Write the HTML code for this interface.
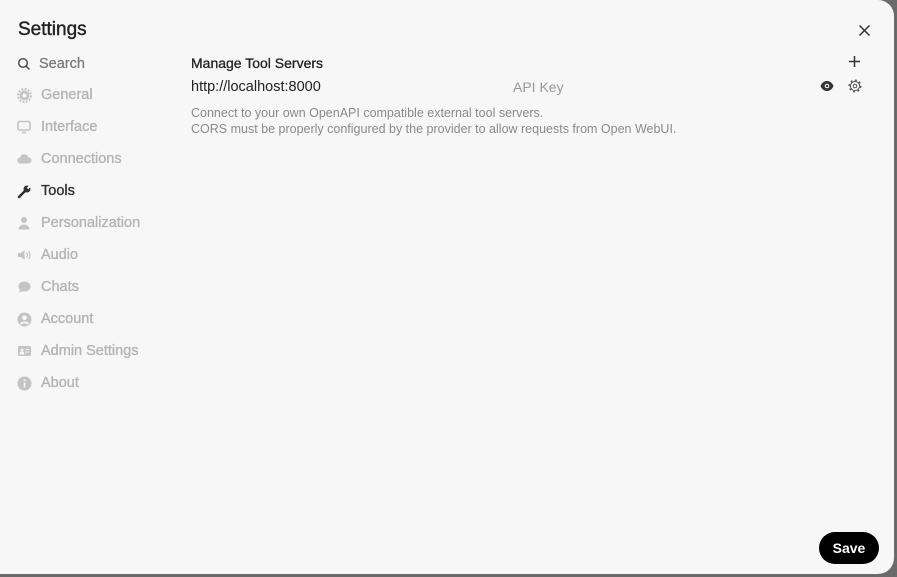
<!DOCTYPE html>
<html><head><style>
html,body{margin:0;padding:0;width:897px;height:577px;overflow:hidden;background:#6b6b6b;font-family:"Liberation Sans",sans-serif;}
.panel{position:absolute;left:0;top:0;width:894px;height:574px;background:#f7f7f7;border-radius:0 16px 16px 0;}
.t{position:absolute;white-space:nowrap;}
.nav{position:absolute;left:17px;font-size:14.5px;color:#b4b4b4;-webkit-text-stroke:0.35px #b4b4b4;}
.nav svg{position:absolute;left:0;top:1px;}
.nav span{position:absolute;left:24px;top:0;white-space:nowrap;}
</style></head><body>
<div class="panel">
<div class="t" style="left:18px;top:19px;font-size:19px;color:#222;-webkit-text-stroke:0.4px #222">Settings</div>
<svg style="position:absolute;left:858px;top:24px" width="13" height="13" viewBox="0 0 13 13"><path d="M1.5 1.5L11.5 11.5M11.5 1.5L1.5 11.5" stroke="#333" stroke-width="1.5"/></svg>

<div class="nav" style="top:56px;-webkit-text-stroke:0.2px #777"><svg width="14" height="14" viewBox="0 0 14 14"><circle cx="6" cy="6" r="4.3" fill="none" stroke="#444" stroke-width="1.4"/><path d="M9.2 9.2L12.5 12.5" stroke="#444" stroke-width="1.4"/></svg><span style="left:22px;color:#777">Search</span></div>
<div class="nav" style="top:87px"><svg width="15" height="15" viewBox="0 0 15 15"><circle cx="7.5" cy="7.5" r="5" fill="#c4c4c4"/><circle cx="7.5" cy="7.5" r="6.5" fill="none" stroke="#c4c4c4" stroke-width="2" stroke-dasharray="2 1.4"/><circle cx="7.5" cy="7.5" r="2" fill="#f7f7f7"/></svg><span>General</span></div>
<div class="nav" style="top:119px"><svg width="14" height="14" viewBox="0 0 14 14"><rect x="1" y="1.5" width="12" height="8.5" rx="1.5" fill="none" stroke="#c4c4c4" stroke-width="1.6"/><path d="M5 12.5h4" stroke="#c4c4c4" stroke-width="1.6"/></svg><span>Interface</span></div>
<div class="nav" style="top:151px"><svg width="15" height="14" viewBox="0 0 15 14"><path d="M3.5 11.5a3 3 0 0 1-.3-6 4.2 4.2 0 0 1 8.1-.2 3.1 3.1 0 0 1 .2 6.2z" fill="#c4c4c4"/></svg><span>Connections</span></div>
<div class="nav" style="top:183px;color:#333;-webkit-text-stroke:0.35px #333"><svg width="15" height="15" viewBox="0 0 15 15"><path d="M2 13L8 7" stroke="#333" stroke-width="2.6" stroke-linecap="round"/><circle cx="10" cy="5" r="3.5" fill="#333"/><path d="M10.5 4.5L13 2" stroke="#f7f7f7" stroke-width="2"/></svg><span>Tools</span></div>
<div class="nav" style="top:215px"><svg width="14" height="14" viewBox="0 0 14 14"><circle cx="7" cy="4" r="3" fill="#c4c4c4"/><path d="M1.5 13.5a5.5 5 0 0 1 11 0z" fill="#c4c4c4"/></svg><span>Personalization</span></div>
<div class="nav" style="top:247px"><svg width="15" height="14" viewBox="0 0 15 14"><path d="M1 5h3l3.5-3v10L4 9H1z" fill="#c4c4c4"/><path d="M9.5 4.5a3.5 3.5 0 0 1 0 5M11.5 3a6 6 0 0 1 0 8" stroke="#c4c4c4" stroke-width="1.2" fill="none"/></svg><span>Audio</span></div>
<div class="nav" style="top:279px"><svg width="15" height="14" viewBox="0 0 15 14"><path d="M7.5 1.5c3.6 0 6 2.2 6 5s-2.4 5-6 5c-.8 0-1.5-.1-2.2-.3L2 12.5l1-2.6C2 9 1.5 7.8 1.5 6.5c0-2.8 2.4-5 6-5z" fill="#c4c4c4"/></svg><span>Chats</span></div>
<div class="nav" style="top:311px"><svg width="15" height="15" viewBox="0 0 15 15"><circle cx="7.5" cy="7.5" r="7" fill="#c4c4c4"/><circle cx="7.5" cy="5.8" r="2.3" fill="#f7f7f7"/><path d="M3.5 12a5 4 0 0 1 8 0" stroke="#f7f7f7" stroke-width="1.8" fill="none"/></svg><span>Account</span></div>
<div class="nav" style="top:343px"><svg width="15" height="14" viewBox="0 0 15 14"><rect x="1" y="2" width="13" height="10" rx="1.5" fill="#c4c4c4"/><circle cx="5" cy="6" r="1.5" fill="#f7f7f7"/><path d="M3 10a2 2 0 0 1 4 0z M8.5 5.5h3.5M8.5 8h3.5" stroke="#f7f7f7" stroke-width="1" fill="#f7f7f7"/></svg><span>Admin Settings</span></div>
<div class="nav" style="top:375px"><svg width="15" height="15" viewBox="0 0 15 15"><circle cx="7.5" cy="7.5" r="7" fill="#c4c4c4"/><rect x="6.7" y="6.5" width="1.6" height="5" fill="#f7f7f7"/><circle cx="7.5" cy="4.3" r="1" fill="#f7f7f7"/></svg><span>About</span></div>

<div class="t" style="left:191px;top:55px;font-size:14px;color:#222;-webkit-text-stroke:0.3px #222">Manage Tool Servers</div>
<svg style="position:absolute;left:848px;top:55px" width="13" height="13" viewBox="0 0 13 13"><path d="M6.5 1v11M1 6.5h11" stroke="#333" stroke-width="1.5"/></svg>
<div class="t" style="left:191px;top:79px;font-size:14.5px;color:#222;">http://localhost:8000</div>
<div class="t" style="left:513px;top:79px;font-size:14px;color:#999;">API Key</div>
<svg style="position:absolute;left:820px;top:80px" width="14" height="12" viewBox="0 0 14 12"><path d="M0.5 6C2 2.5 4.5 1 7 1s5 1.5 6.5 5C12 9.5 9.5 11 7 11S2 9.5.5 6z" fill="#333"/><circle cx="7" cy="6" r="2.3" fill="#f7f7f7"/><circle cx="7" cy="6" r="1.2" fill="#333"/></svg>
<svg style="position:absolute;left:848px;top:79px" width="14" height="14" viewBox="0 0 14 14"><circle cx="7" cy="7" r="4.6" fill="none" stroke="#555" stroke-width="1"/><circle cx="7" cy="7" r="5.8" fill="none" stroke="#555" stroke-width="1.4" stroke-dasharray="2 2.5"/><circle cx="7" cy="7" r="1.8" fill="none" stroke="#555" stroke-width="1"/></svg>
<div class="t" style="left:191px;top:105px;font-size:12.5px;color:#8a8a8a;line-height:16px;">Connect to your own OpenAPI compatible external tool servers.<br>CORS must be properly configured by the provider to allow requests from Open WebUI.</div>

<div style="position:absolute;left:819px;top:532px;width:60px;height:32px;border-radius:16px;background:#000;color:#fff;font-size:14px;font-weight:bold;text-align:center;line-height:32px;">Save</div>
</div>
</body></html>
